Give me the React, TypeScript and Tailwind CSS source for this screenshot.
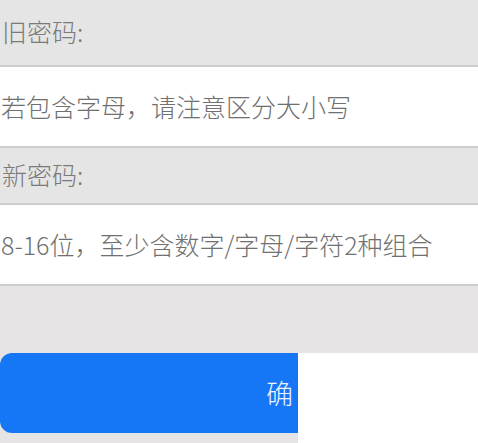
import React from "react";

const font = { fontFamily: '"Noto Sans CJK SC", "Noto Sans", sans-serif' };

const LabelRow = ({ text, height }: { text: string; height: string }) => (
  <div
    className={`flex items-center border-b-2 border-[#cdcdcd] bg-[#e5e5e5] pb-[1px] pl-[2px] text-[25px] font-light text-[#7a7a7a] ${height}`}
  >
    {text}
  </div>
);

const InputRow = ({ placeholder }: { placeholder: string }) => (
  <div className="flex h-[81px] items-center border-b-2 border-[#cdcdcd] bg-white pl-[1px]">
    <span className="text-[25px] font-light text-[#707070]">{placeholder}</span>
  </div>
);

export default function App() {
  return (
    <div className="h-[443px] w-[478px] overflow-hidden bg-[#e5e5e5]" style={font}>
      <LabelRow text="旧密码:" height="h-[67px]" />
      <InputRow placeholder="若包含字母，请注意区分大小写" />
      <LabelRow text="新密码:" height="h-[57px]" />
      <InputRow placeholder="8-16位，至少含数字/字母/字符2种组合" />
      <div className="h-[67px] bg-[#e6e4e4]" />
      {/* bottom: button + cropped white area */}
      <div className="flex h-[90px]">
        <div className="flex w-[298px] flex-col bg-[#e6e4e4]">
          <button className="flex h-[80px] items-center justify-end rounded-l-[12px] bg-[#1677f6] pr-[5px] text-[27px] font-light text-[#eaf3ff]">
            确
          </button>
        </div>
        <div className="flex-1 bg-white" />
      </div>
    </div>
  );
}
